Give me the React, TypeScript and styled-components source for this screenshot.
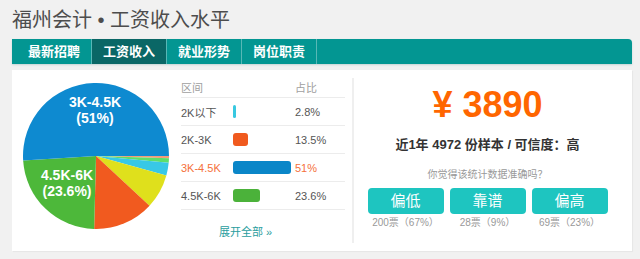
import React from 'react';
import styled, { createGlobalStyle } from 'styled-components';

const GlobalStyle = createGlobalStyle`
  body {
    margin: 0;
    background: #f1f1f1;
    font-family: "Liberation Sans", "Noto Sans CJK SC", sans-serif;
  }
`

const Page = styled.div`
  width: 640px;
  height: 259px;
  padding: 0 8px 0 12px;
  box-sizing: border-box;
  overflow: hidden;
`

const Title = styled.h1`
  margin: 0;
  height: 39px;
  padding-bottom: 3px;
  box-sizing: border-box;
  display: flex;
  align-items: center;
  font-size: 20px;
  font-weight: 400;
  color: #4d4d4d;
  white-space: pre;
`

const TabBar = styled.div`
  display: flex;
  height: 25px;
  background: #039692;
  border-top-right-radius: 4px;
  box-shadow: 0 1px 2px rgba(0, 90, 90, 0.18);
`

const Tab = styled.div<{ $active?: boolean; $first?: boolean }>`
  height: 25px;
  line-height: 25px;
  padding: 0 11px 0 ${({ $first }) => ($first ? '16px' : '11px')};
  border-right: 1px solid #58b8b6;
  background: ${({ $active }) => ($active ? '#0a6766' : 'transparent')};
  color: #fff;
  font-size: 13px;
  font-weight: 700;
`

const Panel = styled.div`
  margin-top: 6px;
  height: 181px;
  background: #fff;
  display: flex;
  box-shadow: 1px 1px 1px rgba(0, 0, 0, 0.04);
`

const PieBox = styled.div`
  width: 169px;
  padding: 13px 0 0 11px;
  box-sizing: border-box;
`

const Table = styled.div`
  width: 164px;
  margin-right: 7px;
  padding-top: 6px;
  font-size: 11px;
`

const Row = styled.div<{ $head?: boolean; $hot?: boolean }>`
  display: grid;
  grid-template-columns: 52px 62px 50px;
  align-items: center;
  height: ${({ $head }) => ($head ? '22px' : '28px')};
  border-bottom: 1px solid #ececec;
  box-sizing: border-box;
  color: ${({ $head, $hot }) => ($head ? '#a0a0a0' : $hot ? '#f5703a' : '#555')};
`

const Bar = styled.span<{ $color: string }>`
  display: block;
  height: 13px;
  border-radius: 3px;
  background: ${({ $color }) => $color};
`

const More = styled.div`
  margin-top: 14px;
  padding-left: 38px;
  line-height: 16px;
  color: #2a9d9e;
  font-size: 11px;
`

const Divider = styled.div`
  width: 2px;
  margin: 8px 0;
  background: #efefef;
`

const Summary = styled.div`
  flex: 1;
  padding-right: 11px;
  display: flex;
  flex-direction: column;
  align-items: center;
`

const Price = styled.div`
  margin-top: 15px;
  line-height: 40px;
  font-size: 36px;
  font-weight: 700;
  color: #ff6600;
`

const Stats = styled.div`
  margin-top: 11px;
  line-height: 18px;
  font-size: 13px;
  font-weight: 700;
  color: #333;
`

const Question = styled.div`
  margin-top: 14px;
  line-height: 14px;
  font-size: 10px;
  color: #999;
`

const Votes = styled.div<{ $gap: number }>`
  display: grid;
  grid-template-columns: repeat(3, 76px);
  column-gap: 6px;
  margin-top: ${({ $gap }) => $gap}px;
`

const VoteButton = styled.div`
  height: 26px;
  line-height: 26px;
  border-radius: 4px;
  background: #1ec5c0;
  color: #fff;
  font-size: 15px;
  text-align: center;
`

const VoteCount = styled.div`
  line-height: 14px;
  text-align: center;
  font-size: 10px;
  color: #999;
`

const slices = [
  { v: 0.5, c: '#f69b7b' },
  { v: 1.0, c: '#5ddf6a' },
  { v: 2.8, c: '#38c8e6' },
  { v: 7.6, c: '#dfe01c' },
  { v: 13.5, c: '#f15a1f' },
  { v: 23.6, c: '#4db83a' },
  { v: 51, c: '#0e8ad0' },
]

const rows = [
  { label: '2K以下', pct: '2.8%', v: 2.8, c: '#38c8e0' },
  { label: '2K-3K', pct: '13.5%', v: 13.5, c: '#f05a1e' },
  { label: '3K-4.5K', pct: '51%', v: 51, c: '#0a86c8', hot: true },
  { label: '4.5K-6K', pct: '23.6%', v: 23.6, c: '#4bb23a' },
]

const votes = [
  { name: '偏低', count: '200票（67%）' },
  { name: '靠谱', count: '28票（9%）' },
  { name: '偏高', count: '69票（23%）' },
]

function arcPath(cx: number, cy: number, r: number, a0: number, a1: number) {
  const p = (a: number) => [cx + r * Math.cos((a * Math.PI) / 180), cy + r * Math.sin((a * Math.PI) / 180)]
  const [x0, y0] = p(a0)
  const [x1, y1] = p(a1)
  const large = a1 - a0 > 180 ? 1 : 0
  return `M${cx},${cy} L${x0},${y0} A${r},${r} 0 ${large} 1 ${x1},${y1} Z`
}

function Pie() {
  let start = 0
  return (
    <svg width="146" height="146" viewBox="0 0 146 146">
      {slices.map((s, i) => {
        const end = start + (s.v / 100) * 360
        const d = arcPath(73, 73, 73, start, end)
        start = end
        return <path key={i} d={d} fill={s.c} />
      })}
      <g fill="#fff" fontSize="14" fontWeight="700" textAnchor="middle" fontFamily="Liberation Sans, sans-serif">
        <text x="72" y="24">3K-4.5K</text>
        <text x="72" y="40">(51%)</text>
        <text x="44" y="97">4.5K-6K</text>
        <text x="44" y="113">(23.6%)</text>
      </g>
    </svg>
  )
}

export default function App() {
  return (
    <Page>
      <GlobalStyle />
      <Title>福州会计 • 工资收入水平</Title>
      <TabBar>
        <Tab $first>最新招聘</Tab>
        <Tab $active>工资收入</Tab>
        <Tab>就业形势</Tab>
        <Tab>岗位职责</Tab>
      </TabBar>
      <Panel>
        <PieBox>
          <Pie />
        </PieBox>
        <Table>
          <Row $head>
            <span>区间</span>
            <span />
            <span>占比</span>
          </Row>
          {rows.map(r => (
            <Row key={r.label} $hot={r.hot}>
              <span>{r.label}</span>
              <span>
                <Bar $color={r.c} style={{ width: Math.max(3, Math.round(r.v * 1.14)) }} />
              </span>
              <span>{r.pct}</span>
            </Row>
          ))}
          <More>展开全部 »</More>
        </Table>
        <Divider />
        <Summary>
          <Price>¥ 3890</Price>
          <Stats>近1年 4972 份样本 / 可信度：高</Stats>
          <Question>你觉得该统计数据准确吗？</Question>
          <Votes $gap={6}>
            {votes.map(v => <VoteButton key={v.name}>{v.name}</VoteButton>)}
          </Votes>
          <Votes $gap={2}>
            {votes.map(v => <VoteCount key={v.name}>{v.count}</VoteCount>)}
          </Votes>
        </Summary>
      </Panel>
    </Page>
  )
}
